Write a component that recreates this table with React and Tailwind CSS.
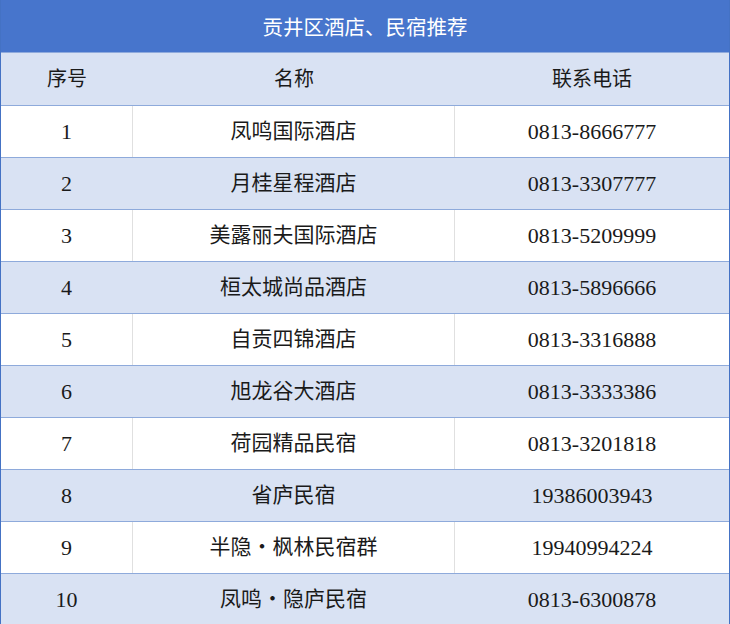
import React from "react";

const rows = [
  ["1", "凤鸣国际酒店", "0813-8666777"],
  ["2", "月桂星程酒店", "0813-3307777"],
  ["3", "美露丽夫国际酒店", "0813-5209999"],
  ["4", "桓太城尚品酒店", "0813-5896666"],
  ["5", "自贡四锦酒店", "0813-3316888"],
  ["6", "旭龙谷大酒店", "0813-3333386"],
  ["7", "荷园精品民宿", "0813-3201818"],
  ["8", "省庐民宿", "19386003943"],
  ["9", "半隐・枫林民宿群", "19940994224"],
  ["10", "凤鸣・隐庐民宿", "0813-6300878"],
];

const serif = { fontFamily: '"Liberation Serif", "Noto Sans CJK SC", serif' };

export default function App() {
  return (
    <div className="w-[730px] h-[624px] overflow-hidden bg-white">
      <div className="border-l border-r border-[#4472C4]">
        <div
          className="h-[53px] bg-[#4775CC] border-b border-[#8FAADC] flex items-center justify-center text-white text-[20.5px]"
          style={{ fontFamily: '"Noto Sans CJK SC", sans-serif' }}
        >
          贡井区酒店、民宿推荐
        </div>
        <div
          className="h-[53px] bg-[#D9E2F3] border-b border-[#8EAADB] grid grid-cols-[132px_322px_1fr] text-[20px] text-[#1a1a1a]"
          style={serif}
        >
          <div className="flex items-center justify-center">序号</div>
          <div className="flex items-center justify-center">名称</div>
          <div className="flex items-center justify-center">联系电话</div>
        </div>
        {rows.map((r, i) => {
          const blue = i % 2 === 1;
          return (
            <div
              key={i}
              className={
                "h-[52px] border-b border-[#8EAADB] grid grid-cols-[132px_322px_1fr] text-[#1a1a1a] " +
                (blue ? "bg-[#D9E2F3]" : "bg-white")
              }
              style={serif}
            >
              <div
                className={
                  "flex items-center justify-center border-r text-[22px] " +
                  (blue ? "border-[#D9E2F3]" : "border-[#E0E0E0]")
                }
              >
                {r[0]}
              </div>
              <div
                className={
                  "flex items-center justify-center border-r text-[21px] " +
                  (blue ? "border-[#D9E2F3]" : "border-[#E0E0E0]")
                }
              >
                {r[1]}
              </div>
              <div className="flex items-center justify-center text-[22px]">{r[2]}</div>
            </div>
          );
        })}
      </div>
    </div>
  );
}
